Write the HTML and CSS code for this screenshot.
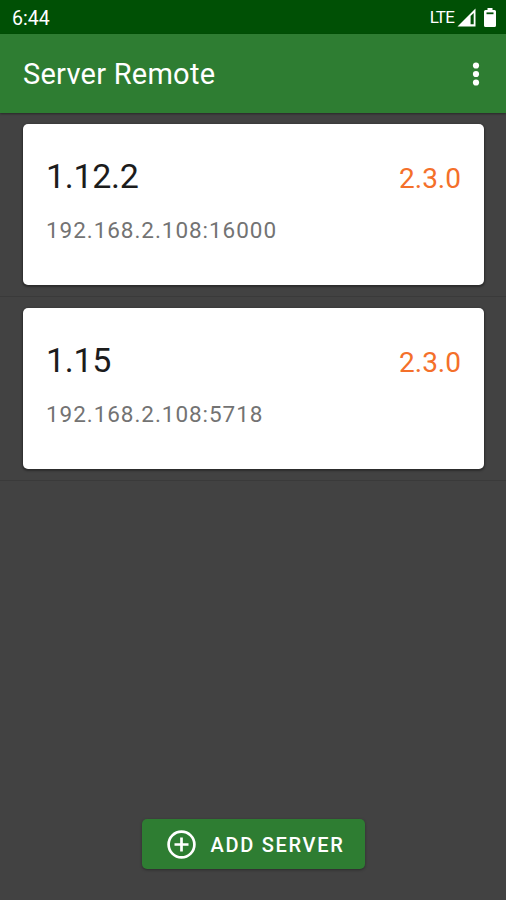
FILE: index.html
```
<!DOCTYPE html>
<html lang="en">
<head>
    <meta charset="UTF-8">
    <meta name="viewport" content="width=device-width, initial-scale=1.0">
    <title>Server Remote</title>
    <link rel="stylesheet" href="styles.css">
</head>
<body>
    <div class="status-bar">
        <span class="clock">6:44</span>
        <div class="status-icons">
            <span class="network">LTE</span>
            <svg class="signal" width="19" height="19" viewBox="0 0 19 19">
                <path d="M0.5 18.5 18.5 0.5V18.5Z" fill="#fff"/>
                <path d="M13.6 8 16.7 5V16.3H13.6Z" fill="#005005"/>
            </svg>
            <svg class="battery" width="12" height="19" viewBox="0 0 12 19">
                <path d="M3.5 0H8.5V2H10.5Q12 2 12 3.5V17.5Q12 19 10.5 19H1.5Q0 19 0 17.5V3.5Q0 2 1.5 2H3.5Z" fill="#fff"/>
                <path d="M2.5 4.4H9.5V6.2H2.5Z" fill="#005005"/>
            </svg>
        </div>
    </div>

    <header class="app-bar">
        <h1>Server Remote</h1>
        <button class="menu-button" aria-label="More options">
            <svg width="8" height="24" viewBox="0 0 8 24" fill="#fff">
                <circle cx="4" cy="3.5" r="3.1"/>
                <circle cx="4" cy="12" r="3.1"/>
                <circle cx="4" cy="20.5" r="3.1"/>
            </svg>
        </button>
    </header>

    <main class="server-list">
        <div class="server-row">
            <div class="card">
                <div class="card-head">
                    <h2>1.12.2</h2>
                    <span class="version">2.3.0</span>
                </div>
                <p class="address">192.168.2.108:16000</p>
            </div>
        </div>
        <div class="server-row">
            <div class="card">
                <div class="card-head">
                    <h2>1.15</h2>
                    <span class="version">2.3.0</span>
                </div>
                <p class="address">192.168.2.108:5718</p>
            </div>
        </div>
    </main>

    <footer class="footer">
        <button class="add-button">
            <svg width="29" height="29" viewBox="0 0 29 29" fill="none" stroke="#fff" stroke-width="2.7">
                <circle cx="14.5" cy="14.5" r="12.9"/>
                <path d="M14.5 7.5V21.5M7.5 14.5H21.5"/>
            </svg>
            <span class="add-label">ADD SERVER</span>
        </button>
    </footer>
</body>
</html>
```

FILE: styles.css
```
* {
    box-sizing: border-box;
    margin: 0;
    padding: 0;
    font-family: Roboto, sans-serif;
}

body {
    background-color: #424242;
    display: flex;
    flex-direction: column;
    height: 100vh;
    overflow: hidden;
}

button {
    border: none;
    background: none;
    color: #fff;
    cursor: pointer;
}

svg {
    display: block;
}

/* Status bar */
.status-bar {
    display: flex;
    justify-content: space-between;
    align-items: center;
    height: 34px;
    padding: 0 10px 0 12px;
    background-color: #005005;
    color: #fff;
}

.clock {
    font-size: 19.5px;
    padding-top: 2px;
}

.status-icons {
    display: flex;
    align-items: center;
}

.network {
    font-size: 17px;
    letter-spacing: -0.8px;
    margin-right: 3px;
}

.signal {
    margin-right: 8px;
}

/* App bar */
.app-bar {
    display: flex;
    justify-content: space-between;
    align-items: center;
    height: 79px;
    padding: 0 26px 0 23px;
    background-color: #2e7d32;
    color: #fff;
    box-shadow: 0 1px 2px rgba(0, 0, 0, 0.4);
}

.app-bar h1 {
    font-size: 29px;
    font-weight: 400;
    letter-spacing: 0.25px;
}

/* Server list */
.server-list {
    flex: 1;
}

.server-row {
    height: 184px;
    padding: 11px 22px 11px 23px;
    border-bottom: 1px solid #3a3a3a;
}

.card {
    height: 161px;
    padding: 32px 23px 0 23px;
    background-color: #fff;
    border-radius: 5px;
    box-shadow: 0 1px 2px 1px rgba(0, 0, 0, 0.35);
}

.card-head {
    display: flex;
    justify-content: space-between;
    align-items: baseline;
    height: 40px;
}

.card h2 {
    font-size: 34px;
    font-weight: 400;
    letter-spacing: -0.3px;
    color: #1c1c1c;
}

.version {
    font-size: 28px;
    color: #f4702a;
}

.address {
    margin-top: 21px;
    font-size: 22.5px;
    letter-spacing: 0.95px;
    color: #737373;
}

/* Bottom action */
.footer {
    display: flex;
    justify-content: center;
    padding-bottom: 31px;
}

.add-button {
    display: flex;
    align-items: center;
    gap: 15px;
    width: 223px;
    height: 50px;
    padding-left: 25px;
    background-color: #2e7d32;
    border-radius: 5px;
    box-shadow: 0 1px 3px rgba(0, 0, 0, 0.35);
    font-size: 20px;
    font-weight: 500;
    letter-spacing: 1.7px;
    white-space: nowrap;
}

.add-label {
    padding-top: 2px;
}
```
